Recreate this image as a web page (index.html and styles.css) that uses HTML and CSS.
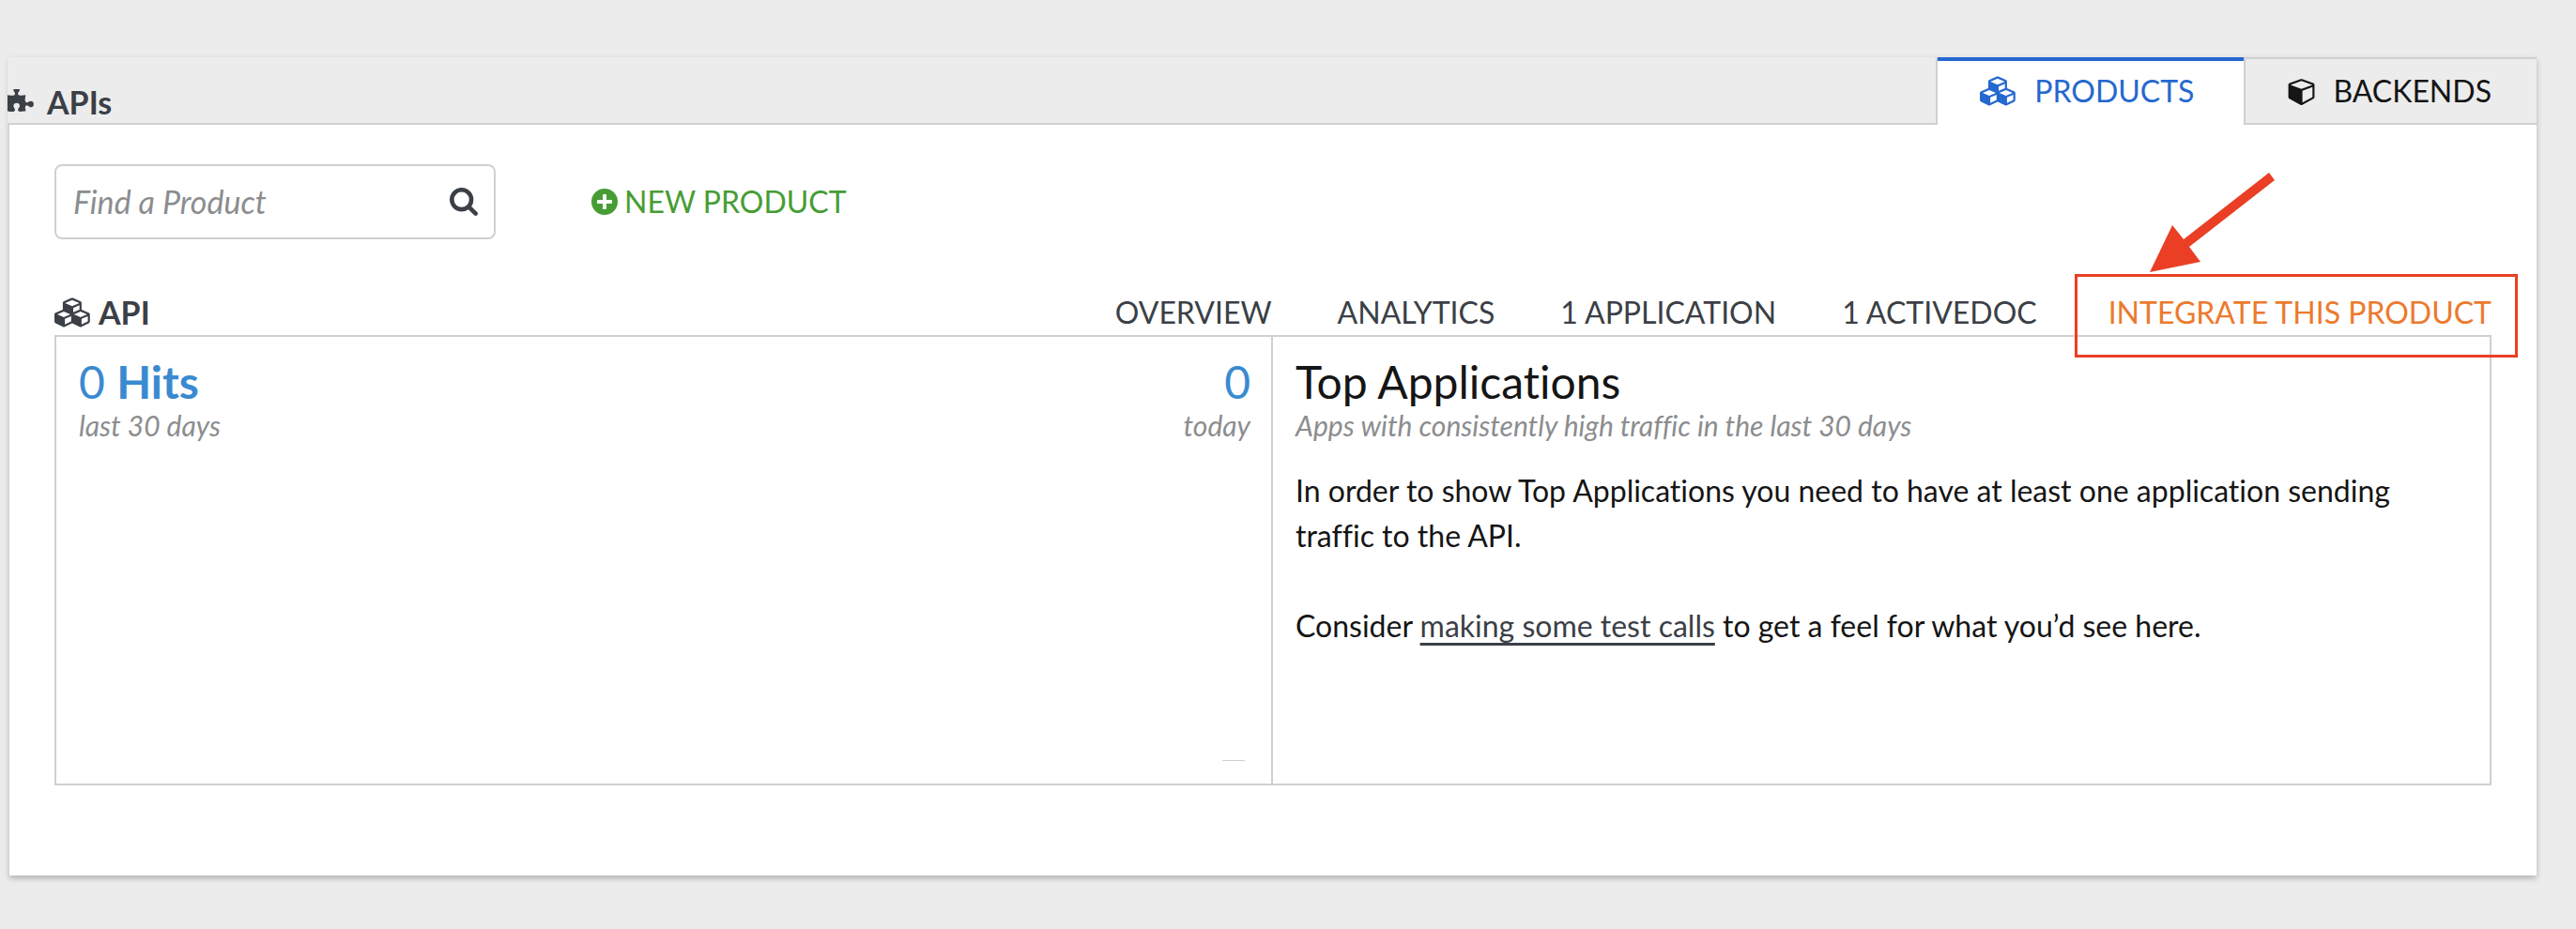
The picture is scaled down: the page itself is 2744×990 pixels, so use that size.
FILE: index.html
```html
<!DOCTYPE html>
<html lang="en">
<head>
<meta charset="utf-8">
<title>APIs</title>
<link rel="stylesheet" href="styles.css">
</head>
<body>
<svg class="sprite" aria-hidden="true">
  <symbol id="cubes" viewBox="0 0 2304 1792"><path d="M640 1632l384-192v-314l-384 164v342zm-64-454l404-173-404-173-404 173zm1088 454l384-192v-314l-384 164v342zm-64-454l404-173-404-173-404 173zm-448-293l384-165v-266l-384 164v267zm-64-379l441-189-441-189-441 189zm1088 518v416q0 36-19 67t-52 47l-448 224q-25 14-57 14t-57-14l-448-224q-5-2-7-4-2 2-7 4l-448 224q-25 14-57 14t-57-14l-448-224q-33-16-52-47t-19-67v-416q0-38 21.500-70t56.500-48l434-186v-400q0-38 21.500-70t56.500-48l448-192q23-10 50-10t50 10l448 192q35 16 56.500 48t21.500 70v400l434 186q36 16 57 48t21 70z"/></symbol>
  <symbol id="cube" viewBox="0 0 1664 1792"><path d="M896 1629l640-349v-636l-640 233v752zm-64-865l698-254-698-254-698 254zm832-252v768q0 35-18 65t-49 47l-704 384q-28 16-61 16t-61-16l-704-384q-31-17-49-47t-18-65v-768q0-40 23-73t61-47l704-256q22-8 44-8t44 8l704 256q38 14 61 47t23 73z"/></symbol>
  <symbol id="puzzle" viewBox="96 128 1664 1664"><path d="M1755 1082q0 81-44.500 135t-123.500 54q-41 0-77.500-17.500t-59-38-56.500-38-71-17.500q-110 0-110 124 0 39 16 115t15 115v5q-22 0-33 1-34 3-97.500 11.500t-115.500 13.500-98 5q-61 0-103-26.500t-42-83.500q0-37 17.500-71t38-56.500 38-59 17.500-77.500q0-79-54-123.500t-135-44.500q-84 0-143 45.500t-59 127.500q0 43 15 83t33.500 64.500 33.500 53 15 50.500q0 45-46 89-37 35-117 35-95 0-245-24-9-2-27.500-4t-27.500-4l-13-2q-1 0-3-1-2 0-2-1v-1024q2 1 17.500 3.500t34 5 21.500 3.500q150 24 245 24 80 0 117-35 46-44 46-89 0-22-15-50.500t-33.500-53-33.500-64.500-15-83q0-82 59-127.500t144-45.500q80 0 134 44.500t54 123.500q0 41-17.500 77.500t-38 59-38 56.500-17.500 71q0 57 42 83.500t103 26.500q64 0 180-15t163-17v2q-1 2-3.500 17.500t-5 34-3.500 21.500q-24 150-24 245 0 80 35 117 44 46 89 46 22 0 50.500-15t53-33.500 64.500-33.500 83-15q82 0 127.500 59t45.500 143z"/></symbol>
  <symbol id="search" viewBox="64 128 1664 1664"><path d="M1216 832q0-185-131.500-316.500t-316.500-131.500-316.500 131.500-131.500 316.500 131.500 316.500 316.500 131.500 316.500-131.500 131.500-316.500zm512 832q0 52-38 90t-90 38q-54 0-90-38l-343-342q-179 124-399 124-143 0-273.500-55.500t-225-150-150-225-55.500-273.500 55.500-273.500 150-225 225-150 273.500-55.500 273.500 55.500 225 150 150 225 55.500 273.500q0 220-124 399l343 343q37 37 37 90z"/></symbol>
  <symbol id="plus" viewBox="0 0 28 28"><path fill-rule="evenodd" d="M14 0a14 14 0 1 0 0 28a14 14 0 0 0 0-28zM13 6h2q1 0 1 1v5h5q1 0 1 1v2q0 1-1 1h-5v5q0 1-1 1h-2q-1 0-1-1v-5h-5q-1 0-1-1v-2q0-1 1-1h5v-5q0-1 1-1z"/></symbol>
</svg>
<main class="card">
  <header class="card-header">
    <h1 class="title"><svg class="icon-puzzle"><use href="#puzzle"/></svg>APIs</h1>
    <nav class="tabs">
      <a class="tab tab-active" href="#products"><svg class="icon-cubes"><use href="#cubes"/></svg>PRODUCTS</a>
      <a class="tab" href="#backends"><svg class="icon-cube"><use href="#cube"/></svg>BACKENDS</a>
    </nav>
  </header>
  <div class="card-body">
    <div class="toolbar">
      <form class="search">
        <input class="search-input" type="search" placeholder="Find a Product" aria-label="Find a Product">
        <button class="search-button" type="button" aria-label="Search"><svg class="icon-search"><use href="#search"/></svg></button>
      </form>
      <a class="new-product" href="#new"><svg class="icon-plus"><use href="#plus"/></svg>NEW PRODUCT</a>
    </div>
    <section class="product">
      <div class="product-header">
        <h2 class="product-title"><svg class="icon-cubes"><use href="#cubes"/></svg>API</h2>
        <nav class="product-nav">
          <a href="#overview">OVERVIEW</a>
          <a href="#analytics">ANALYTICS</a>
          <a href="#application">1 APPLICATION</a>
          <a href="#activedoc">1 ACTIVEDOC</a>
          <a class="integrate" href="#integrate">INTEGRATE THIS PRODUCT
            <svg class="arrow" viewBox="0 0 136 108" aria-hidden="true"><path d="M0 106L24 56L36 71L127 0L133 8L42 79L54 95z"/></svg>
          </a>
        </nav>
      </div>
      <div class="panels">
        <div class="panel hits">
          <div>
            <h3 class="stat">0 <strong>Hits</strong></h3>
            <p class="note">last 30 days</p>
          </div>
          <div class="today">
            <h3 class="stat">0</h3>
            <p class="note">today</p>
            <div class="spark"></div>
          </div>
        </div>
        <div class="panel">
          <h3 class="heading">Top Applications</h3>
          <p class="note">Apps with consistently high traffic in the last 30 days</p>
          <p class="copy">In order to show Top Applications you need to have at least one application sending traffic to the API.</p>
          <p class="copy">Consider <a href="#test">making some test calls</a> to get a feel for what you’d see here.</p>
        </div>
      </div>
    </section>
  </div>
</main>
</body>
</html>
```
FILE: styles.css
```css
* { box-sizing: border-box; }

body {
  margin: 0;
  min-height: 100vh;
  padding: 61px 42px 56px 10px;
  background: #ececec;
  color: #151515;
  font-family: Lato, "Open Sans", sans-serif;
  font-size: 32px;
  font-variant-ligatures: no-common-ligatures;
  line-height: 48px;
}

h1, h2, h3, p { margin: 0; font-weight: 400; }
a { color: inherit; text-decoration: none; }
svg { fill: currentColor; flex: none; }
.sprite { display: none; }

.card { box-shadow: 0 3px 6px rgba(0, 0, 0, 0.25); background: #fff; }

.card-header {
  display: flex;
  justify-content: space-between;
  align-items: flex-end;
  margin-left: -2px;
  background: #ececec;
  border-bottom: 2px solid #d0d0d0;
}
.title {
  display: flex;
  align-items: center;
  gap: 14px;
  height: 44px;
  color: #3b3f46;
  font-size: 34px;
  font-weight: 700;
}
.tabs { display: flex; margin-bottom: -2px; }
.tab {
  display: flex;
  align-items: center;
  gap: 18px;
  height: 72px;
  padding: 0 48px 0 46px;
  border: solid #d0d0d0;
  border-width: 2px 0;
}
.tab-active {
  padding: 0 53px 4px 45px;
  color: #2568cf;
  background: #fff;
  border-top: 4px solid #2568cf;
  border-bottom: 0;
  box-shadow: -2px 0 #d0d0d0, 2px 0 #d0d0d0;
}
.icon-puzzle { width: 28px; height: 28px; }
.icon-cubes { width: 40px; height: 32px; }
.icon-cube { width: 31px; height: 30px; }
.icon-search { width: 30px; height: 30px; display: block; }
.icon-plus { width: 28px; height: 28px; }

.card-body { padding: 42px 48px 96px; }
.toolbar { display: flex; align-items: center; gap: 102px; }
.search {
  display: flex;
  align-items: center;
  width: 470px;
  height: 80px;
  padding: 0 17px 0 18px;
  border: 2px solid #d0d0d0;
  border-radius: 8px;
}
.search-input {
  flex: 1;
  min-width: 0;
  padding: 0;
  border: 0;
  outline: 0;
  background: none;
  font: inherit;
  font-size: 34px;
}
.search-input::placeholder { color: #8b8d8f; font-style: italic; opacity: 1; }
.search-button { padding: 0; border: 0; background: none; color: #3b3f46; }
.new-product { display: flex; align-items: center; gap: 7px; color: #479d34; }

.product { margin-top: 54px; color: #3b3f46; }
.product-header { display: flex; justify-content: space-between; }
.product-title {
  display: flex;
  align-items: center;
  gap: 7px;
  font-size: 34px;
  font-weight: 700;
}
.product-nav { display: flex; gap: 70px; }
.integrate { position: relative; padding-left: 6px; color: #ec7a2d; }
.integrate::after {
  content: "";
  position: absolute;
  inset: -17px -28px -24px -30px;
  border: 3px solid #ea3f25;
}
.arrow {
  position: absolute;
  left: 50px;
  top: -125px;
  width: 136px;
  height: 108px;
  fill: #ea3f25;
}

.panels {
  display: grid;
  grid-template-columns: 1fr 1fr;
  min-height: 480px;
  border: 2px solid #d0d0d0;
  color: #151515;
}
.panel { padding: 20px 24px 24px; }
.hits {
  display: flex;
  justify-content: space-between;
  padding-right: 22px;
  border-right: 2px solid #d0d0d0;
}
.stat, .heading { font-size: 48px; line-height: 56px; }
.stat { color: #3a8ad0; }
.note { color: #8b8d8f; font-size: 30px; font-style: italic; line-height: 36px; }
.today { display: flex; flex-direction: column; text-align: right; }
.spark { width: 24px; height: 1px; margin: auto 6px 0 auto; background: #d0d0d0; }
.copy { margin-top: 48px; }
.note + .copy { margin-top: 28px; }
.copy a { color: #3b3f46; text-decoration: underline; text-decoration-thickness: 3px; text-underline-offset: 6px; }
```
